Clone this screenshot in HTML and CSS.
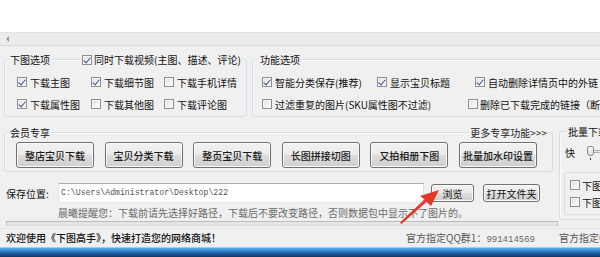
FILE: index.html
```html
<!DOCTYPE html>
<html lang="zh-CN">
<head>
<meta charset="utf-8">
<title>下图高手</title>
<link rel="stylesheet" href="styles.css">
</head>
<body>
<div class="window">
  <div class="topbar"></div>
  <div class="hscroll"><span class="hs-arrow"></span></div>

  <div class="row-a">
    <div class="group g1">
      <div class="group-head">
        <span class="cap">下图选项</span>
        <span class="cap cap-cb"><span class="cb on"></span>同时下载视频(主图、描述、评论)</span>
      </div>
      <div class="cb-grid g1-grid">
        <span class="item"><span class="cb on"></span>下载主图</span>
        <span class="item"><span class="cb on"></span>下载细节图</span>
        <span class="item"><span class="cb"></span>下载手机详情</span>
        <span class="item"><span class="cb on"></span>下载属性图</span>
        <span class="item"><span class="cb"></span>下载其他图</span>
        <span class="item"><span class="cb"></span>下载评论图</span>
      </div>
    </div>
    <div class="group g2">
      <div class="group-head">
        <span class="cap">功能选项</span>
      </div>
      <div class="cb-line">
        <span class="item w115"><span class="cb on"></span>智能分类保存(推荐)</span>
        <span class="item w98"><span class="cb on"></span>显示宝贝标题</span>
        <span class="item"><span class="cb on"></span>自动删除详情页中的外链</span>
      </div>
      <div class="cb-line">
        <span class="item w206"><span class="cb"></span>过滤重复的图片(SKU属性图不过滤)</span>
        <span class="item tight"><span class="cb"></span>删除已下载完成的链接（断点续传）</span>
      </div>
    </div>
  </div>

  <div class="row-b">
    <div class="left-col">
      <div class="group g3">
        <div class="group-head">
          <span class="cap">会员专享</span>
          <span class="cap more">更多专享功能&gt;&gt;&gt;</span>
        </div>
        <div class="btn-row">
          <button class="btn big">整店宝贝下载</button>
          <button class="btn big">宝贝分类下载</button>
          <button class="btn big">整页宝贝下载</button>
          <button class="btn big">长图拼接切图</button>
          <button class="btn big">又拍相册下图</button>
          <button class="btn big">批量加水印设置</button>
        </div>
      </div>
      <div class="save-row">
        <span class="save-label">保存位置:</span>
        <span class="path-input">C:\Users\Administrator\Desktop\222</span>
        <button class="btn small browse">浏览</button>
        <button class="btn small open">打开文件夹</button>
      </div>
      <div class="hint">晨曦提醒您：下载前请先选择好路径，下载后不要改变路径，否则数据包中显示不了图片的。</div>
      <div class="progress"></div>
    </div>
    <div class="group g4">
      <div class="group-head">
        <span class="cap">批量下载设置</span>
      </div>
      <div class="speed-row">
        <span>快</span>
        <span class="slider"><span class="thumb"></span><span class="track"></span><span class="tick"></span></span>
      </div>
      <div class="inner-box">
        <span class="item"><span class="cb"></span>下图选项</span>
        <span class="item"><span class="cb"></span>下图设置</span>
      </div>
    </div>
  </div>

  <div class="status">
    <span class="st-welcome">欢迎使用《下图高手》，快速打造您的网络商城！</span>
    <span class="st-qq">官方指定QQ群1：<span class="num">991414569</span></span>
    <span class="st-qq2">官方指定QQ群2：</span>
  </div>
  <div class="taskbar"></div>

  <svg class="red-arrow" width="60" height="50" viewBox="390 185 60 50" aria-hidden="true">
    <polygon points="439,190 420,196 424.5,199.5 400,222.5 401.5,224 426.5,202 431,206" fill="#e5372c"/>
  </svg>
</div>
</body>
</html>
```

FILE: styles.css
```css
* { box-sizing: border-box; }

html, body {
  margin: 0;
  padding: 0;
}

body {
  width: 600px;
  height: 257px;
  overflow: hidden;
  background: #f0f0f0;
  font-family: "Noto Sans CJK SC", "Noto Sans", sans-serif;
  font-size: 10px;
  color: #111;
}

.window {
  position: relative;
  width: 600px;
  height: 257px;
  overflow: hidden;
}

.topbar {
  height: 32px;
  background: #ffffff;
}

.hscroll {
  height: 14px;
  background: #ececec;
  border-top: 1px solid #e2e2e2;
  border-bottom: 1px solid #dadada;
  display: flex;
  align-items: center;
  padding-left: 6px;
}

.hs-arrow {
  width: 0;
  height: 0;
  border-top: 3px solid transparent;
  border-bottom: 3px solid transparent;
  border-right: 3px solid #9a9a9a;
}

/* group boxes */
.group {
  border: 1px solid #d5dfe5;
  border-radius: 3px;
  box-shadow: inset 1px 1px 0 #fbfbfb;
}

.group-head {
  display: flex;
  height: 14px;
  line-height: 14px;
  margin-top: -7px;
}

.cap {
  background: #f0f0f0;
  padding: 0 1px;
  white-space: nowrap;
  display: flex;
  align-items: center;
}

.row-a {
  display: flex;
  gap: 5px;
  margin-top: 13px;
  padding-left: 4px;
}

.g1 {
  width: 243px;
  flex: none;
  padding: 0 0 1px 12px;
}

.g1 .group-head { margin-left: -8px; }

.cap-cb { margin-left: 30px; }
.cap-cb .cb { margin-right: 2px; }

.g2 {
  width: 420px;
  flex: none;
  padding: 0 0 1px 9px;
}

.g2 .group-head { margin-left: -3px; }

.cb-grid {
  display: grid;
  grid-template-columns: 74px 73px auto;
  grid-auto-rows: 22px;
  margin-top: 4px;
}

.cb-line {
  display: flex;
  height: 22px;
}
.g2 .group-head + .cb-line { margin-top: 4px; }

.item {
  display: flex;
  align-items: center;
  white-space: nowrap;
  gap: 3px;
}
.item.tight { gap: 2px; }
.w115 { width: 115px; flex: none; }
.w98 { width: 98px; flex: none; }
.w206 { width: 206px; flex: none; }

/* checkbox */
.cb {
  width: 10px;
  height: 10px;
  flex: none;
  border: 1px solid #8e8f8f;
  background: linear-gradient(135deg, #dcdcdc 0%, #f4f4f4 60%, #ffffff 100%);
  box-shadow: inset 0 0 0 1px #f6f6f6;
  position: relative;
}

.cb.on::after {
  content: "";
  position: absolute;
  left: 2px;
  top: 0px;
  width: 3px;
  height: 6px;
  border-right: 1.5px solid #3d4f8e;
  border-bottom: 1.5px solid #3d4f8e;
  transform: rotate(40deg);
}

/* row b */
.row-b {
  display: grid;
  grid-template-columns: 549px 120px;
  column-gap: 6px;
  align-items: start;
  margin-top: 15px;
  padding-left: 4px;
}

.g3 {
  padding: 0 0 3px 11px;
}

.g3 .group-head {
  margin-left: -7px;
  margin-right: 4px;
}

.more {
  margin-left: auto;
  color: #222;
}

.btn-row {
  display: flex;
  gap: 10.6px;
  margin-top: 2px;
}

.btn {
  font-family: inherit;
  color: #111;
  border: 1px solid #707070;
  border-radius: 3px;
  background: linear-gradient(#f2f2f2 0%, #ebebeb 49%, #dddddd 50%, #cfcfcf 100%);
  box-shadow: inset 0 0 0 1px #fbfbfb;
  padding: 0;
  margin: 0;
  white-space: nowrap;
}

.btn.big {
  width: 78px;
  height: 26px;
  font-size: 10px;
  font-weight: 500;
  color: #1a1a1a;
}

.save-row {
  display: flex;
  align-items: center;
  height: 20px;
  margin-top: 11px;
  padding-left: 2px;
}

.save-label {
  width: 52px;
  flex: none;
}

.path-input {
  width: 366px;
  height: 20px;
  flex: none;
  background: #fff;
  border: 1px solid #abadb3;
  border-left-color: #e2e3ea;
  border-right-color: #dbdfe6;
  border-bottom-color: #e3e9ef;
  font-family: "Liberation Mono", monospace;
  font-size: 8.2px;
  color: #555;
  line-height: 18px;
  padding-left: 2px;
}

.btn.small {
  height: 18px;
  font-size: 10px;
}

.browse {
  width: 43px;
  margin-left: 7px;
}

.open {
  width: 57px;
  margin-left: 9px;
}

.hint {
  margin-top: 3px;
  height: 14px;
  line-height: 14px;
  padding-left: 54px;
  color: #6a6a6a;
  white-space: nowrap;
}

.progress {
  margin-top: 1px;
  margin-left: 2px;
  width: 552px;
  height: 5px;
  border: 1px solid #bcbcbc;
  border-bottom-color: #dcdcdc;
  background: #e6e6e6;
}

/* right panel */
.g4 {
  margin-top: -1px;
  height: 89px;
  padding: 0 0 0 5px;
}

.g4 .group-head { margin-left: 2px; }

.speed-row {
  display: flex;
  align-items: center;
  height: 20px;
  margin-top: 3px;
  gap: 12px;
}

.slider {
  position: relative;
  width: 40px;
  height: 14px;
}

.thumb {
  position: absolute;
  left: 0;
  top: 1px;
  width: 7px;
  height: 10px;
  border: 1px solid #8a8a8a;
  border-radius: 2px 2px 3px 3px;
  background: linear-gradient(#fafafa, #dcdcdc);
  z-index: 1;
}

.track {
  position: absolute;
  left: 6px;
  top: 5px;
  width: 40px;
  height: 3px;
  border: 1px solid #b0b0b0;
  background: #e7eaea;
}

.tick {
  position: absolute;
  left: 3px;
  top: 13px;
  width: 1px;
  height: 2px;
  background: #333;
}

.inner-box {
  margin-top: 10px;
  margin-left: -1px;
  border: 1px solid #d5dfe5;
  border-radius: 3px;
  height: 43px;
  padding: 5px 0 0 5px;
  display: flex;
  flex-direction: column;
  gap: 3px;
}

.inner-box .item { height: 14px; gap: 2px; }

/* status */
.status {
  margin-top: 2px;
  width: 600px;
  height: 18px;
  display: flex;
  align-items: center;
  white-space: nowrap;
  border-top: 1px solid #e4e4e4;
}

.st-welcome {
  width: 406px;
  flex: none;
  padding-left: 6px;
  font-weight: 500;
  color: #111;
}

.st-qq {
  width: 153px;
  flex: none;
  color: #555;
}

.num {
  font-family: "Liberation Mono", monospace;
  font-size: 9px;
  color: #666;
}

.st-qq2 { color: #555; }

.taskbar {
  height: 11px;
  background: linear-gradient(#e4f1fb 0px, #e4f1fb 1px, #59aee8 2px, #3b8fd6 4px, #1d62a8 7px, #10355f 11px);
}

.red-arrow {
  position: absolute;
  left: 390px;
  top: 185px;
}
```
